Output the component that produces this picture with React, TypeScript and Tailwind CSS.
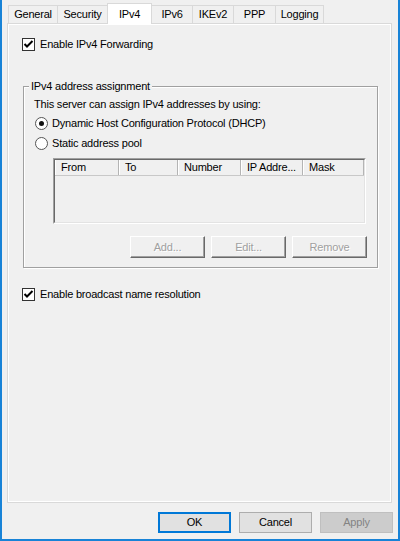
import React from 'react';

const tabs = [
  { label: 'General', w: 'w-[50px] border-l' },
  { label: 'Security', w: 'w-[50px]' },
  { label: 'IPv4', w: 'w-[45px]', active: true },
  { label: 'IPv6', w: 'w-[41px]' },
  { label: 'IKEv2', w: 'w-[41px]' },
  { label: 'PPP', w: 'w-[42px]' },
  { label: 'Logging', w: 'w-[48px]' },
];

const columns = [
  { label: 'From', w: 'w-[64px]' },
  { label: 'To', w: 'w-[59px]' },
  { label: 'Number', w: 'w-[63px]' },
  { label: 'IP Addre...', w: 'w-[62px]' },
  { label: 'Mask', w: 'w-[61px]' },
];

function CheckBox({ label, className = '' }: { label: string; className?: string }) {
  return (
    <div className={`flex items-center gap-[5px] h-[13px] ${className}`}>
      <span className="w-[13px] h-[13px] shrink-0 border border-[#333333] bg-white flex items-center justify-center">
        <svg width="11" height="11" viewBox="0 0 11 11">
          <polyline points="1.5,5 4,7.5 9.5,2" fill="none" stroke="#000" strokeWidth="2" />
        </svg>
      </span>
      <span>{label}</span>
    </div>
  );
}

function Radio({ label, checked, className = '' }: { label: string; checked?: boolean; className?: string }) {
  return (
    <div className={`flex items-center gap-[4px] h-[13px] ${className}`}>
      <span className="w-[13px] h-[13px] shrink-0 rounded-full border border-[#555555] bg-white flex items-center justify-center">
        {checked && <span className="w-[5px] h-[5px] rounded-full bg-[#111111]" />}
      </span>
      <span>{label}</span>
    </div>
  );
}

function ClassicButton({ label }: { label: string }) {
  return (
    <div className="w-[75px] h-[22px] bg-[#f0f0f0] border-t border-l border-t-white border-l-white border-r border-b border-r-[#696969] border-b-[#696969] shadow-[inset_-1px_-1px_0_#a0a0a0] flex items-center justify-center text-[#a0a0a0] [text-shadow:1px_1px_0_#ffffff]">
      {label}
    </div>
  );
}

export default function App() {
  return (
    <div className="w-[400px] h-[541px] bg-[#f0f0f0] border-l-2 border-r-2 border-b-2 border-[#1883d7] flex flex-col overflow-hidden text-[11px] leading-[13px] tracking-[-0.2px] text-black font-['Liberation_Sans',Arial,sans-serif] select-none">
      {/* tab strip */}
      <div className="h-[23px] flex items-end pl-[6px] shrink-0">
        {tabs.map((t) =>
          t.active ? (
            <div
              key={t.label}
              className={`${t.w} relative z-10 h-[21px] -mb-px -ml-px border-t border-l border-r border-[#d9d9d9] bg-white flex items-center justify-center`}
            >
              {t.label}
            </div>
          ) : (
            <div
              key={t.label}
              className={`${t.w} h-[18px] border-t border-r border-[#d9d9d9] bg-[#f0f0f0] flex items-center justify-center`}
            >
              {t.label}
            </div>
          )
        )}
      </div>

      {/* page */}
      <div className="ml-[5px] w-[385px] h-[480px] shrink-0 border border-[#d9d9d9] shadow-[inset_1px_1px_0_#ffffff,inset_-1px_-1px_0_#ffffff] flex flex-col">
        <CheckBox label="Enable IPv4 Forwarding" className="ml-[14px] mt-[14px]" />

        <div className="relative ml-[15px] mt-[35px] w-[355px] h-[182px] border border-[#a0a0a0] shadow-[1px_1px_0_#ffffff,inset_1px_1px_0_#ffffff] flex flex-col">
          <span className="absolute -top-[7px] left-[5px] px-[2px] bg-[#f0f0f0]">IPv4 address assignment</span>
          <div className="ml-[10px] mt-[11px] h-[13px]">This server can assign IPv4 addresses by using:</div>
          <Radio label="Dynamic Host Configuration Protocol (DHCP)" checked className="ml-[11px] mt-[6px]" />
          <Radio label="Static address pool" className="ml-[11px] mt-[7px]" />

          {/* list view */}
          <div className="ml-[29px] mt-[8px] w-[313px] h-[66px] border-t border-l border-t-[#a0a0a0] border-l-[#a0a0a0] border-r border-b border-r-white border-b-white">
            <div className="w-full h-full border-t border-l border-t-[#696969] border-l-[#696969] border-r border-b border-r-[#e3e3e3] border-b-[#e3e3e3] bg-[#f0f0f0] overflow-hidden">
              <div className="flex h-[16px] border-b border-[#c8c8c8]">
                {columns.map((c) => (
                  <div
                    key={c.label}
                    className={`${c.w} shrink-0 h-full pl-[6px] border-r border-[#b4b4b4] shadow-[inset_1px_0_0_#ffffff] flex items-center`}
                  >
                    {c.label}
                  </div>
                ))}
              </div>
            </div>
          </div>

          <div className="mt-[12px] pr-[10px] flex justify-end gap-[6px]">
            <ClassicButton label="Add..." />
            <ClassicButton label="Edit..." />
            <ClassicButton label="Remove" />
          </div>
        </div>

        <CheckBox label="Enable broadcast name resolution" className="ml-[14px] mt-[20px]" />
      </div>

      {/* dialog buttons */}
      <div className="mt-[9px] h-[21px] shrink-0 flex justify-end gap-[8px] pr-[5px]">
        <button className="w-[73px] h-[21px] border-2 border-[#0078d7] bg-[#e1e1e1] flex items-center justify-center">
          OK
        </button>
        <button className="w-[73px] h-[21px] border border-[#adadad] bg-[#e1e1e1] flex items-center justify-center">
          Cancel
        </button>
        <button className="w-[73px] h-[21px] border border-[#bfbfbf] bg-[#cccccc] text-[#838383] flex items-center justify-center">
          Apply
        </button>
      </div>
    </div>
  );
}
